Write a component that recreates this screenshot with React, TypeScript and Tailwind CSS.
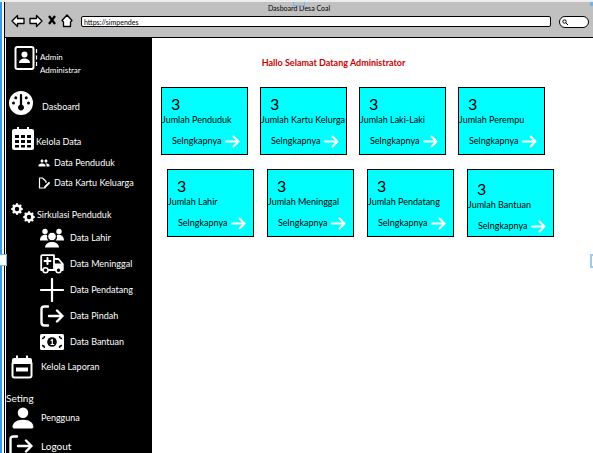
import type { ReactNode } from 'react';
import { FaGauge } from 'react-icons/fa6';
import { BsGearFill, BsPersonFill } from 'react-icons/bs';
import { MdPeople } from 'react-icons/md';

const line = { fill: 'none', stroke: 'currentColor', strokeLinecap: 'round', strokeLinejoin: 'round' } as const;

function ContactIcon() {
  return (
    <svg viewBox="0 0 24 26" className="h-[26px] w-6" aria-hidden="true">
      <rect x="1.500" y="2" width="18" height="22" rx="2" {...line} strokeWidth="2" />
      <circle cx="10.500" cy="9.500" r="3" fill="currentColor" />
      <path d="M5 18c0-6 11-6 11 0z" fill="currentColor" />
      <path d="M22.500 4v4M22.500 10.500v4M22.500 17v4" stroke="currentColor" strokeWidth="1.200" />
    </svg>
  );
}

function CalendarGridIcon() {
  return (
    <svg viewBox="0 0 22 24" className="h-6 w-[22px]" aria-hidden="true">
      <path d="M2 3h3V1h2v2h8V1h2v2h3a2 2 0 0 1 2 2v17a2 2 0 0 1-2 2H2a2 2 0 0 1-2-2V5a2 2 0 0 1 2-2z" fill="currentColor" />
      <path d="M3 9h4v3H3zM9 9h4v3H9zM15 9h4v3h-4zM3 14h4v3H3zM9 14h4v3H9zM15 14h4v3h-4zM3 19h4v2.500H3zM9 19h4v2.500H9zM15 19h4v2.500h-4z" fill="#000" />
    </svg>
  );
}

function FileEditIcon() {
  return (
    <svg viewBox="0 0 12 12" className="size-3" aria-hidden="true">
      <path d="M7 11H1.500V1H4.500L8 4.500v1" {...line} strokeWidth="1.200" />
      <path d="M7 10 11 6" {...line} strokeWidth="1.800" />
    </svg>
  );
}

function GearsIcon() {
  return (
    <span className="flex h-5 w-6 items-end" aria-hidden="true">
      <BsGearFill className="size-3 self-start" />
      <BsGearFill className="size-3" />
    </span>
  );
}

function FamilyIcon() {
  return (
    <svg viewBox="0 0 24 20" className="h-5 w-6" fill="currentColor" aria-hidden="true">
      <circle cx="5" cy="3.500" r="2.700" />
      <circle cx="19" cy="3.500" r="2.700" />
      <path d="M0 12.500C0 6 7 6 7.500 8c-1 2 0 3.500 1 4.500zM24 12.500C24 6 17 6 16.500 8c1 2 0 3.500-1 4.500z" />
      <circle cx="12" cy="8.500" r="4.300" stroke="#000" strokeWidth="1" />
      <path d="M5 19.500c0-7.500 14-7.500 14 0z" />
    </svg>
  );
}

function AmbulanceIcon() {
  return (
    <svg viewBox="0 0 24 20" className="h-5 w-6" aria-hidden="true">
      <path d="M3 16H1.200V2.200Q1.200 1.200 2.200 1.200H14V16M8.500 16h7M14 5h4.500L22.800 10v6H21M14.500 10.500h8" {...line} strokeWidth="1.800" />
      <path d="M14.500 10.500h8V15h-8z" fill="currentColor" />
      <path d="M7.500 4v6M4.500 7h6" {...line} strokeWidth="2" />
      <circle cx="5.500" cy="16.300" r="2.500" fill="#000" stroke="currentColor" strokeWidth="1.500" />
      <circle cx="18.500" cy="16.300" r="2.500" fill="#000" stroke="currentColor" strokeWidth="1.500" />
    </svg>
  );
}

function PlusIcon() {
  return (
    <svg viewBox="0 0 24 24" className="size-6" aria-hidden="true">
      <path d="M12 1v22M1 12h22" {...line} strokeWidth="2.200" />
    </svg>
  );
}

function ExitIcon() {
  return (
    <svg viewBox="0 0 24 22" className="h-[22px] w-6" aria-hidden="true">
      <path d="M8 1.500H4.500Q1.500 1.500 1.500 4.500v13Q1.500 20.500 4.500 20.500H8M9 11h13.500M17 5.500 22.500 11 17 16.500" {...line} strokeWidth="2.400" />
    </svg>
  );
}

function BanknoteIcon() {
  return (
    <svg viewBox="0 0 24 16" className="h-4 w-6" aria-hidden="true">
      <rect width="24" height="16" rx="1.500" fill="currentColor" />
      <circle cx="12" cy="8" r="4.800" fill="#000" />
      <path d="M11 6.500 12.300 5.500v5M11 10.500h2.800" {...line} strokeWidth="1.200" />
      <path d="M2 4.500Q4.500 4.500 4.500 2M22 4.500Q19.500 4.500 19.500 2M2 11.500Q4.500 11.500 4.500 14M22 11.500Q19.500 11.500 19.500 14" fill="none" stroke="#000" strokeWidth="1.300" />
    </svg>
  );
}

function ReportIcon() {
  return (
    <svg viewBox="0 0 22 24" className="h-6 w-[22px]" aria-hidden="true">
      <path d="M1.500 8h19v12.500q0 2-2 2h-15q-2 0-2-2z" {...line} strokeWidth="2" />
      <path d="M1 8V5q0-2 2-2h2V.5h2V3h8V.5h2V3h2q2 0 2 2v3z" fill="currentColor" />
      <path d="M5 12.500h12v4H5z" fill="currentColor" />
    </svg>
  );
}

function ArrowIcon() {
  return (
    <svg viewBox="0 0 15 13" className="h-[13px] w-[15px] text-white" aria-hidden="true">
      <path d="M1 6.500h12.500M8.500 1.500l5 5-5 5" {...line} strokeWidth="2" />
    </svg>
  );
}

function BrowserBar() {
  const tool = { fill: '#fff', stroke: '#000', strokeWidth: 1.3, strokeLinejoin: 'round' } as const;
  return (
    <header className="border-b border-l border-black bg-[#c0c0c0]">
      <h1 className="h-3 text-center text-[7px] leading-3">Dasboard Desa Coal</h1>
      <div className="flex h-[23px] items-start gap-2 pr-1 pl-[6px]">
        <div className="flex items-center gap-1">
          <button type="button" aria-label="Back">
            <svg viewBox="0 0 14 14" className="size-[14px]"><path d="M1 7 6.500 1.500v3H13v5H6.500v3z" {...tool} /></svg>
          </button>
          <button type="button" aria-label="Forward">
            <svg viewBox="0 0 14 14" className="size-[14px]"><path d="M13 7 7.500 1.500v3H1v5h6.500v3z" {...tool} /></svg>
          </button>
          <button type="button" aria-label="Stop">
            <svg viewBox="0 0 10 14" className="h-[14px] w-[10px]"><path d="m2 2 6 8M8 2 2 10" stroke="#000" strokeWidth="2.300" /></svg>
          </button>
          <button type="button" aria-label="Home">
            <svg viewBox="0 0 12 14" className="h-[14px] w-3"><path d="M6 1 11 6.500 9.500 8v4.500h-7V8L1 6.500z" {...tool} /></svg>
          </button>
        </div>
        <input
          aria-label="Address"
          defaultValue="https://simpendes"
          className="mt-[2px] h-[11px] min-w-0 flex-1 rounded-[2px] border border-black bg-white px-[2px] text-[7px] leading-none outline-none"
        />
        <label className="mt-[2px] flex h-3 w-[30px] items-center rounded-full border border-black bg-white pl-[2px]">
          <svg viewBox="0 0 6 6" className="size-[6px] shrink-0" aria-hidden="true">
            <circle cx="2.500" cy="2.500" r="1.700" fill="none" stroke="#000" />
            <path d="m4 4 2 2" stroke="#000" />
          </svg>
          <input aria-label="Search" className="h-2 w-full min-w-0 bg-transparent text-[7px] outline-none" />
        </label>
      </div>
    </header>
  );
}

function SubLink({ icon, children }: { icon: ReactNode; children: ReactNode }) {
  return (
    <a href="#" className="flex h-[26px] items-center gap-[6px] pl-[33px]">
      <span className="flex w-[25px] shrink-0 justify-center">{icon}</span>
      <span>{children}</span>
    </a>
  );
}

function Sidebar() {
  return (
    <nav aria-label="Menu" className="ml-px w-[146px] shrink-0 bg-black text-[9px] leading-4 text-white">
      <div className="flex h-[53px] gap-[2px] pt-[7px] pl-2">
        <ContactIcon />
        <div className="pt-[6px] text-[8px] leading-[13px]">
          <p>Admin</p>
          <p>Administrar</p>
        </div>
      </div>
      <a href="#" className="flex h-6 items-end gap-[9px] pl-[3px]">
        <FaGauge className="size-6" />
        <span>Dasboard</span>
      </a>
      <a href="#" className="mt-[11px] flex h-6 items-end gap-[2px] pl-[6px]">
        <CalendarGridIcon />
        <span>Kelola Data</span>
      </a>
      <div className="mt-[5px] mb-3 flex flex-col gap-1 pl-8">
        <a href="#" className="flex items-center gap-1"><MdPeople className="size-3" />Data Penduduk</a>
        <a href="#" className="flex items-center gap-1"><FileEditIcon />Data Kartu Keluarga</a>
      </div>
      <a href="#" className="mb-[2px] flex h-5 items-end gap-[2px] pl-[5px]">
        <GearsIcon />
        <span>Sirkulasi Penduduk</span>
      </a>
      <SubLink icon={<FamilyIcon />}>Data Lahir</SubLink>
      <SubLink icon={<AmbulanceIcon />}>Data Meninggal</SubLink>
      <SubLink icon={<PlusIcon />}>Data Pendatang</SubLink>
      <SubLink icon={<ExitIcon />}>Data Pindah</SubLink>
      <SubLink icon={<BanknoteIcon />}>Data Bantuan</SubLink>
      <a href="#" className="flex h-6 items-center gap-2 pl-[5px]">
        <ReportIcon />
        <span>Kelola Laporan</span>
      </a>
      <h2 className="mt-[11px] text-[10px] leading-4">Seting</h2>
      <a href="#" className="flex h-6 items-center gap-1 pl-[3px]">
        <BsPersonFill className="size-7" />
        <span>Pengguna</span>
      </a>
      <a href="#" className="mt-1 flex h-6 items-center gap-2 pl-[3px] text-[10px]">
        <ExitIcon />
        <span>Logout</span>
      </a>
    </nav>
  );
}

function Card({ label, low = false }: { label: string; low?: boolean }) {
  return (
    <section className={`h-[68px] w-[87px] shrink-0 border border-black bg-[#00ffff] text-[9px] leading-4 whitespace-nowrap ${low ? 'pt-[11px]' : 'pt-2'}`}>
      <p className="pl-[9px] text-base leading-4">3</p>
      <h3>{label}</h3>
      <a href="#" className="mt-[5px] flex items-center gap-1 pl-[10px]">
        Selngkapnya
        <ArrowIcon />
      </a>
    </section>
  );
}

export default function App() {
  return (
    <div className="relative h-screen overflow-hidden border-t-2 border-[#ececec] bg-white font-['Lato','Open_Sans',sans-serif] text-black">
      <div className="flex h-full border-l-2 border-[#3b99e8] pl-[2px]">
        <div className="flex min-w-0 flex-1 flex-col">
          <BrowserBar />
          <div className="flex min-h-0 flex-1 border-l border-black">
            <Sidebar />
            <main className="min-w-0 flex-1 pt-[17px]">
              <h2 className="pr-[78px] text-center text-[9px] leading-4 font-bold text-[#c80000]">Hallo Selamat Datang Administrator</h2>
              <div className="mt-4 flex gap-3 pl-[9px]">
                <Card label="Jumlah Penduduk" />
                <Card label="Jumlah Kartu Kelurga" />
                <Card label="Jumlah Laki-Laki" />
                <Card label="Jumlah Perempu" />
              </div>
              <div className="mt-[14px] flex gap-[13px] pl-[15px]">
                <Card label="Jumlah Lahir" />
                <Card label="Jumlah Meninggal" />
                <Card label="Jumlah Pendatang" />
                <Card label="Jumlah Bantuan" low />
              </div>
            </main>
          </div>
        </div>
      </div>
      <span className="absolute top-[252px] left-0 h-3 w-[7px] border border-l-0 border-[#6eb5ec] bg-white" />
      <span className="absolute top-[252px] right-0 h-[14px] w-[3px] border-2 border-r-0 border-[#9bcaf2] bg-white" />
      <span className="absolute top-0 left-[293px] h-1 w-3 border border-t-0 border-[#6eb5ec]" />
      <span className="absolute top-0 right-0 h-1 w-[3px] bg-[#6eb5ec]" />
    </div>
  );
}
